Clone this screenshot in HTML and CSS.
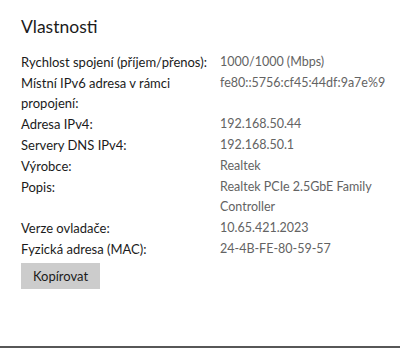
FILE: index.html
```html
<!DOCTYPE html>
<html lang="cs">
<head>
<meta charset="utf-8">
<link rel="stylesheet" href="styles.css">
</head>
<body>
<div class="page">
  <h1 class="title">Vlastnosti</h1>
  <dl class="props">
    <dt>Rychlost spojení (příjem/přenos):</dt><dd>1000/1000 (Mbps)</dd>
    <dt>Místní IPv6 adresa v rámci propojení:</dt><dd>fe80::5756:cf45:44df:9a7e%9</dd>
    <dt>Adresa IPv4:</dt><dd>192.168.50.44</dd>
    <dt>Servery DNS IPv4:</dt><dd>192.168.50.1</dd>
    <dt>Výrobce:</dt><dd>Realtek</dd>
    <dt>Popis:</dt><dd>Realtek PCIe 2.5GbE Family Controller</dd>
    <dt>Verze ovladače:</dt><dd>10.65.421.2023</dd>
    <dt>Fyzická adresa (MAC):</dt><dd>24-4B-FE-80-59-57</dd>
  </dl>
  <button class="btn">Kopírovat</button>
</div>
<div class="bottom-line"></div>
</body>
</html>
```
FILE: styles.css
```css
html, body {
  margin: 0;
  padding: 0;
  background: #ffffff;
}
body {
  width: 400px;
  height: 349px;
  display: flex;
  flex-direction: column;
  font-family: "Lato", "Noto Sans", sans-serif;
  color: #1b1b1b;
  overflow: hidden;
}
.page {
  flex: 1;
  padding: 14px 20px 0 21px;
}
.title {
  margin: 0;
  font-size: 17.5px;
  font-weight: 400;
  line-height: 26px;
  color: #1b1b1b;
}
.props {
  margin: 12px 0 0 0;
  display: grid;
  grid-template-columns: 190px 1fr;
  column-gap: 9px;
  row-gap: 1px;
  font-size: 13px;
  line-height: 20px;
}
.props dt {
  margin: 0;
  color: #1b1b1b;
}
.props dd {
  margin: 0;
  color: #636363;
  font-size: 12.5px;
  padding-right: 22px;
}
.btn {
  display: block;
  margin-top: 4px;
  width: 79px;
  height: 26px;
  border: none;
  background: #cccccc;
  font-family: inherit;
  font-size: 13px;
  color: #1b1b1b;
  padding: 0;
}
.bottom-line {
  height: 2px;
  background: #575757;
  margin-bottom: 1px;
}
```
